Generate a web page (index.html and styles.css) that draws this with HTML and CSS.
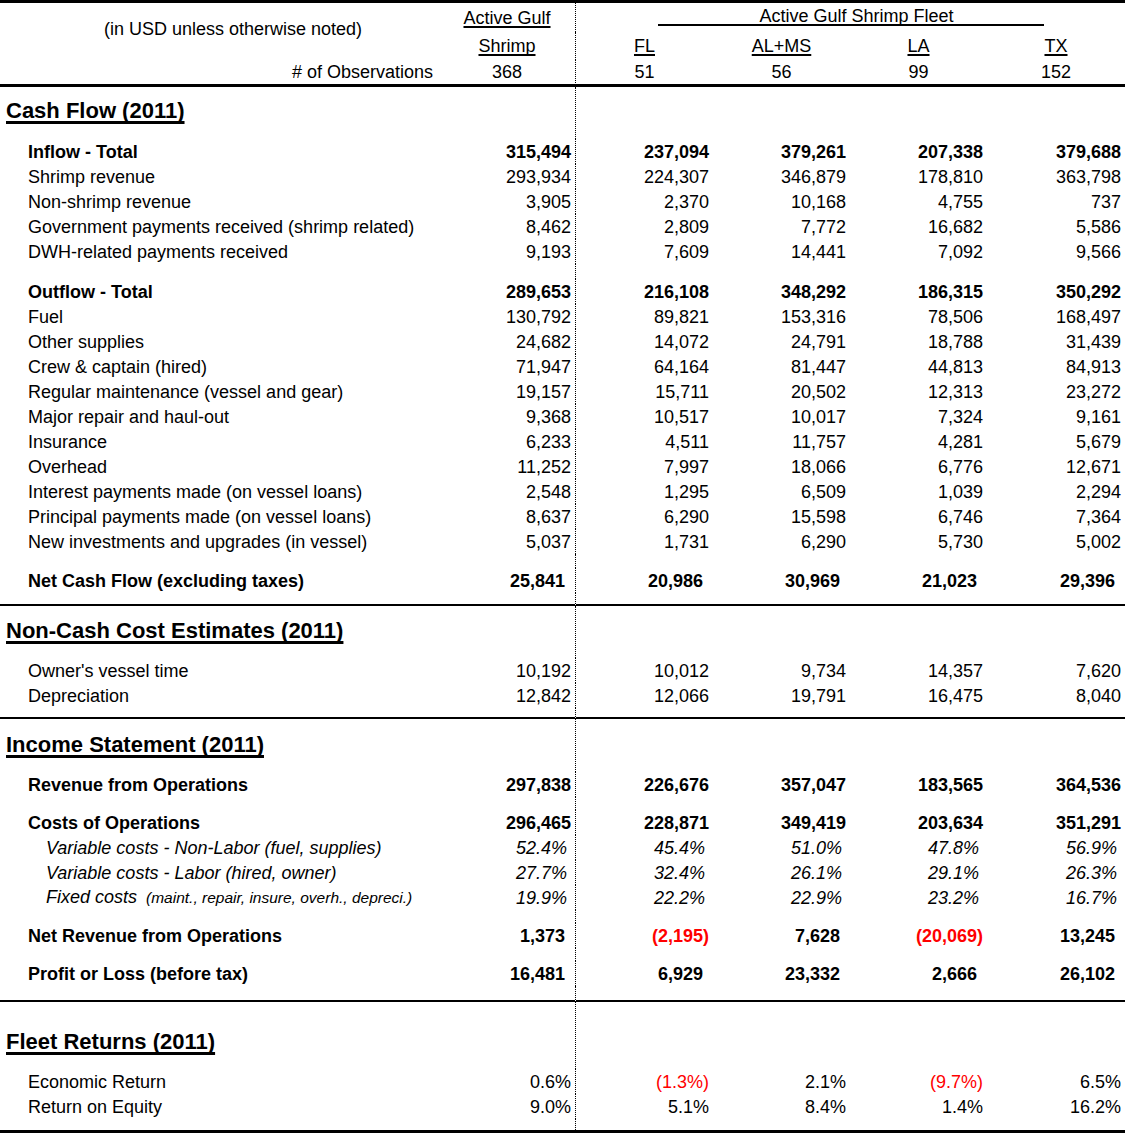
FILE: index.html
```html
<!DOCTYPE html>
<html lang="en">
<head>
<meta charset="utf-8">
<title>Active Gulf Shrimp Fleet – Cash Flow 2011</title>
<link rel="stylesheet" href="styles.css">
</head>
<body>
<table class="sheet">
  <colgroup>
    <col class="c-label"><col class="c-num"><col class="c-num"><col class="c-num"><col class="c-num"><col class="c-last">
  </colgroup>
  <thead>
    <tr class="h1">
      <td class="units" rowspan="2">(in USD unless otherwise noted)</td>
      <td class="ctr sep"><span class="ul">Active Gulf</span></td>
      <td class="fleet" colspan="4"><div class="fleet-title">Active Gulf Shrimp Fleet</div></td>
    </tr>
    <tr class="h2">
      <td class="ctr sep"><span class="ul">Shrimp</span></td>
      <td class="ctr"><span class="ul">FL</span></td>
      <td class="ctr"><span class="ul">AL+MS</span></td>
      <td class="ctr"><span class="ul">LA</span></td>
      <td class="ctr"><span class="ul">TX</span></td>
    </tr>
    <tr class="h3">
      <td class="obs-label"># of Observations</td>
      <td class="ctr sep">368</td>
      <td class="ctr">51</td>
      <td class="ctr">56</td>
      <td class="ctr">99</td>
      <td class="ctr">152</td>
    </tr>
  </thead>
  <tbody>
    <tr class="title t-cash"><td><span class="sec">Cash Flow (2011)</span></td><td class="sep"></td><td></td><td></td><td></td><td></td></tr>

    <tr class="r b"><td class="lbl">Inflow - Total</td><td class="n sep">315,494</td><td class="n">237,094</td><td class="n">379,261</td><td class="n">207,338</td><td class="n">379,688</td></tr>
    <tr class="r"><td class="lbl">Shrimp revenue</td><td class="n sep">293,934</td><td class="n">224,307</td><td class="n">346,879</td><td class="n">178,810</td><td class="n">363,798</td></tr>
    <tr class="r"><td class="lbl">Non-shrimp revenue</td><td class="n sep">3,905</td><td class="n">2,370</td><td class="n">10,168</td><td class="n">4,755</td><td class="n">737</td></tr>
    <tr class="r"><td class="lbl">Government payments received (shrimp related)</td><td class="n sep">8,462</td><td class="n">2,809</td><td class="n">7,772</td><td class="n">16,682</td><td class="n">5,586</td></tr>
    <tr class="r"><td class="lbl">DWH-related payments received</td><td class="n sep">9,193</td><td class="n">7,609</td><td class="n">14,441</td><td class="n">7,092</td><td class="n">9,566</td></tr>

    <tr class="gap g15"><td></td><td class="sep"></td><td></td><td></td><td></td><td></td></tr>

    <tr class="r b"><td class="lbl">Outflow - Total</td><td class="n sep">289,653</td><td class="n">216,108</td><td class="n">348,292</td><td class="n">186,315</td><td class="n">350,292</td></tr>
    <tr class="r"><td class="lbl">Fuel</td><td class="n sep">130,792</td><td class="n">89,821</td><td class="n">153,316</td><td class="n">78,506</td><td class="n">168,497</td></tr>
    <tr class="r"><td class="lbl">Other supplies</td><td class="n sep">24,682</td><td class="n">14,072</td><td class="n">24,791</td><td class="n">18,788</td><td class="n">31,439</td></tr>
    <tr class="r"><td class="lbl">Crew &amp; captain (hired)</td><td class="n sep">71,947</td><td class="n">64,164</td><td class="n">81,447</td><td class="n">44,813</td><td class="n">84,913</td></tr>
    <tr class="r"><td class="lbl">Regular maintenance (vessel and gear)</td><td class="n sep">19,157</td><td class="n">15,711</td><td class="n">20,502</td><td class="n">12,313</td><td class="n">23,272</td></tr>
    <tr class="r"><td class="lbl">Major repair and haul-out</td><td class="n sep">9,368</td><td class="n">10,517</td><td class="n">10,017</td><td class="n">7,324</td><td class="n">9,161</td></tr>
    <tr class="r"><td class="lbl">Insurance</td><td class="n sep">6,233</td><td class="n">4,511</td><td class="n">11,757</td><td class="n">4,281</td><td class="n">5,679</td></tr>
    <tr class="r"><td class="lbl">Overhead</td><td class="n sep">11,252</td><td class="n">7,997</td><td class="n">18,066</td><td class="n">6,776</td><td class="n">12,671</td></tr>
    <tr class="r"><td class="lbl">Interest payments made (on vessel loans)</td><td class="n sep">2,548</td><td class="n">1,295</td><td class="n">6,509</td><td class="n">1,039</td><td class="n">2,294</td></tr>
    <tr class="r"><td class="lbl">Principal payments made (on vessel loans)</td><td class="n sep">8,637</td><td class="n">6,290</td><td class="n">15,598</td><td class="n">6,746</td><td class="n">7,364</td></tr>
    <tr class="r"><td class="lbl">New investments and upgrades (in vessel)</td><td class="n sep">5,037</td><td class="n">1,731</td><td class="n">6,290</td><td class="n">5,730</td><td class="n">5,002</td></tr>

    <tr class="gap g14"><td></td><td class="sep"></td><td></td><td></td><td></td><td></td></tr>

    <tr class="r b"><td class="lbl">Net Cash Flow (excluding taxes)</td><td class="n acc sep">25,841</td><td class="n acc">20,986</td><td class="n acc">30,969</td><td class="n acc">21,023</td><td class="n acc">29,396</td></tr>

    <tr class="gap g11 rule"><td></td><td class="sep"></td><td></td><td></td><td></td><td></td></tr>

    <tr class="title t-noncash"><td><span class="sec">Non-Cash Cost Estimates (2011)</span></td><td class="sep"></td><td></td><td></td><td></td><td></td></tr>

    <tr class="r"><td class="lbl">Owner's vessel time</td><td class="n sep">10,192</td><td class="n">10,012</td><td class="n">9,734</td><td class="n">14,357</td><td class="n">7,620</td></tr>
    <tr class="r"><td class="lbl">Depreciation</td><td class="n sep">12,842</td><td class="n">12,066</td><td class="n">19,791</td><td class="n">16,475</td><td class="n">8,040</td></tr>

    <tr class="gap g9 rule"><td></td><td class="sep"></td><td></td><td></td><td></td><td></td></tr>

    <tr class="title t-income"><td><span class="sec">Income Statement (2011)</span></td><td class="sep"></td><td></td><td></td><td></td><td></td></tr>

    <tr class="r b"><td class="lbl">Revenue from Operations</td><td class="n sep">297,838</td><td class="n">226,676</td><td class="n">357,047</td><td class="n">183,565</td><td class="n">364,536</td></tr>

    <tr class="gap g13"><td></td><td class="sep"></td><td></td><td></td><td></td><td></td></tr>

    <tr class="r b"><td class="lbl">Costs of Operations</td><td class="n sep">296,465</td><td class="n">228,871</td><td class="n">349,419</td><td class="n">203,634</td><td class="n">351,291</td></tr>
    <tr class="r i"><td class="lbl sub">Variable costs - Non-Labor (fuel, supplies)</td><td class="n pct sep">52.4%</td><td class="n pct">45.4%</td><td class="n pct">51.0%</td><td class="n pct">47.8%</td><td class="n pct">56.9%</td></tr>
    <tr class="r i"><td class="lbl sub">Variable costs - Labor (hired, owner)</td><td class="n pct sep">27.7%</td><td class="n pct">32.4%</td><td class="n pct">26.1%</td><td class="n pct">29.1%</td><td class="n pct">26.3%</td></tr>
    <tr class="r i"><td class="lbl sub">Fixed costs<span class="note">(maint., repair, insure, overh., depreci.)</span></td><td class="n pct sep">19.9%</td><td class="n pct">22.2%</td><td class="n pct">22.9%</td><td class="n pct">23.2%</td><td class="n pct">16.7%</td></tr>

    <tr class="gap g13"><td></td><td class="sep"></td><td></td><td></td><td></td><td></td></tr>

    <tr class="r b"><td class="lbl">Net Revenue from Operations</td><td class="n acc sep">1,373</td><td class="n neg">(2,195)</td><td class="n acc">7,628</td><td class="n neg">(20,069)</td><td class="n acc">13,245</td></tr>

    <tr class="gap g13"><td></td><td class="sep"></td><td></td><td></td><td></td><td></td></tr>

    <tr class="r b"><td class="lbl">Profit or Loss (before tax)</td><td class="n acc sep">16,481</td><td class="n acc">6,929</td><td class="n acc">23,332</td><td class="n acc">2,666</td><td class="n acc">26,102</td></tr>

    <tr class="gap g14 rule"><td></td><td class="sep"></td><td></td><td></td><td></td><td></td></tr>

    <tr class="title t-fleet"><td><span class="sec">Fleet Returns (2011)</span></td><td class="sep"></td><td></td><td></td><td></td><td></td></tr>

    <tr class="r"><td class="lbl">Economic Return</td><td class="n sep">0.6%</td><td class="n neg">(1.3%)</td><td class="n">2.1%</td><td class="n neg">(9.7%)</td><td class="n">6.5%</td></tr>
    <tr class="r"><td class="lbl">Return on Equity</td><td class="n sep">9.0%</td><td class="n">5.1%</td><td class="n">8.4%</td><td class="n">1.4%</td><td class="n">16.2%</td></tr>

    <tr class="gap g11"><td></td><td class="sep"></td><td></td><td></td><td></td><td></td></tr>
  </tbody>
</table>
</body>
</html>
```

FILE: styles.css
```css
html, body {
  margin: 0;
  padding: 0;
  background: #ffffff;
}

body {
  font-family: "Liberation Sans", Arial, sans-serif;
  font-size: 18px;
  color: #000000;
}

.sheet {
  width: 1125px;
  table-layout: fixed;
  border-collapse: separate;
  border-spacing: 0;
  border-top: 3px solid #000;
  border-bottom: 3px solid #000;
}

.c-label { width: 439px; }
.c-num { width: 137px; }
.c-last { width: 138px; }

.sheet td {
  padding: 0;
  line-height: 20px;
  white-space: nowrap;
  vertical-align: middle;
}

.sheet td.sep {
  border-right: 1px dotted #000;
}

/* ---------- header ---------- */
.h1 td { height: 29px; }
.h2 td { height: 28px; }
.h3 td { height: 24px; border-bottom: 3px solid #000; }

.units {
  text-align: center;
  padding-left: 27px !important;
  padding-bottom: 6px !important;
}

.ctr { text-align: center; }

.ul {
  text-decoration: underline;
  text-decoration-thickness: 2px;
  text-underline-offset: 2px;
  text-decoration-skip-ink: none;
}

.sheet td.fleet {
  vertical-align: top;
}

.fleet-title {
  box-sizing: border-box;
  width: 386px;
  margin: 5px auto 0;
  padding-left: 12px;
  line-height: 16px;
  text-align: center;
  border-bottom: 2px solid #000;
}

.obs-label {
  text-align: right;
  padding-right: 6px !important;
}

/* ---------- section titles ---------- */
.sec {
  font-size: 22px;
  font-weight: bold;
  margin-left: 6px;
  text-decoration: underline;
  text-decoration-thickness: 3px;
  text-underline-offset: 3px;
  text-decoration-skip-ink: none;
}

.title td { height: 52px; vertical-align: top; }
.t-cash td { line-height: 48px; }
.t-noncash td { line-height: 50px; }
.t-income td { height: 51px; line-height: 51px; }
.t-fleet td { height: 67px; vertical-align: bottom; line-height: 52px; }

/* ---------- data rows ---------- */
.r td { height: 25px; }
.b td { font-weight: bold; }
.i td { font-style: italic; }

.lbl { padding-left: 28px !important; }
.lbl.sub { padding-left: 46px !important; }

.note {
  font-size: 15.5px;
  margin-left: 9px;
}

.n {
  text-align: right;
  padding-right: 4px !important;
}
.n.acc { padding-right: 10px !important; }
.n.pct { padding-right: 8px !important; }
.neg { color: #ff0000; }

/* ---------- spacers and rules ---------- */
.gap td { height: 15px; }
.g9 td { height: 9px; }
.g11 td { height: 11px; }
.g13 td { height: 13px; }
.g14 td { height: 14px; }
.g15 td { height: 15px; }
.rule td { border-bottom: 2px solid #000; }
```
